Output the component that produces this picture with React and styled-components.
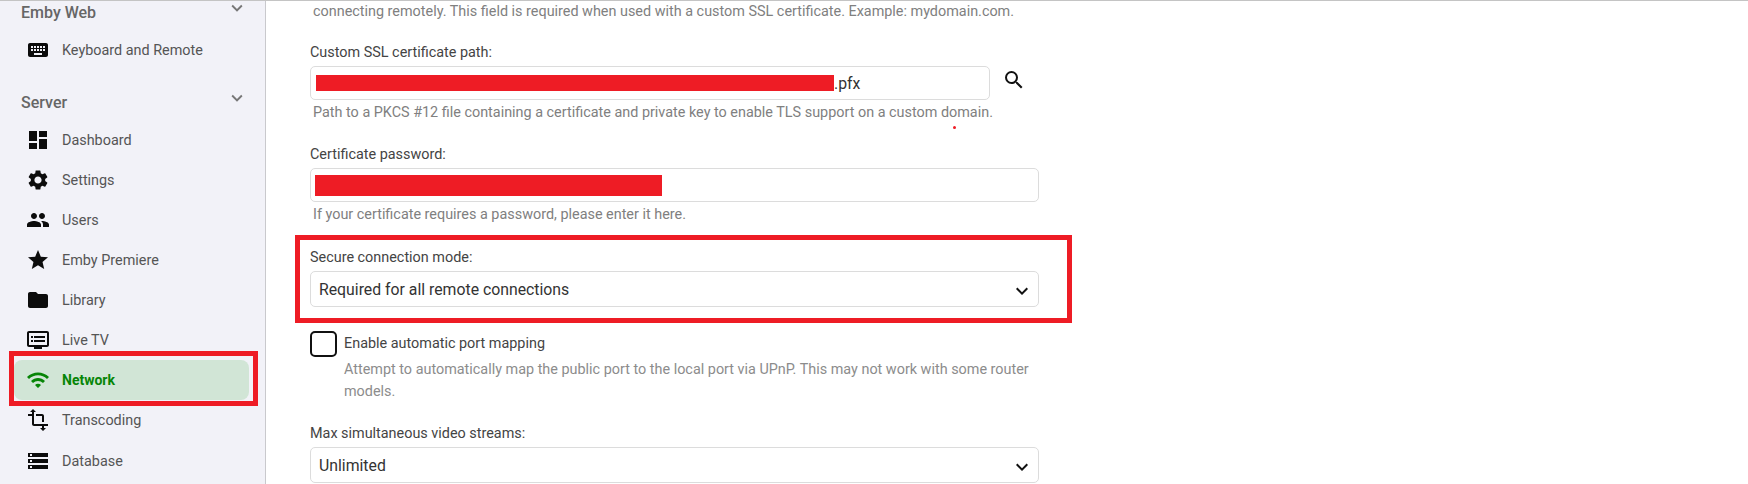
import React from "react";
import styled, {createGlobalStyle} from "styled-components";
import {
  MdKeyboard,
  MdDashboard,
  MdSettings,
  MdPeople,
  MdStar,
  MdFolder,
  MdDvr,
  MdWifi,
  MdTransform,
  MdStorage,
  MdSearch,
  MdKeyboardArrowDown,
} from "react-icons/md";

const sections = [
  {
    title: "Emby Web",
    items: [{icon: MdKeyboard, label: "Keyboard and Remote"}],
  },
  {
    title: "Server",
    items: [
      {icon: MdDashboard, label: "Dashboard"},
      {icon: MdSettings, label: "Settings"},
      {icon: MdPeople, label: "Users"},
      {icon: MdStar, label: "Emby Premiere"},
      {icon: MdFolder, label: "Library"},
      {icon: MdDvr, label: "Live TV"},
      {icon: MdWifi, label: "Network", active: true},
      {icon: MdTransform, label: "Transcoding"},
      {icon: MdStorage, label: "Database"},
    ],
  },
];

function App() {
  return (
    <Page>
      <GlobalStyle />
      <Sidebar>
        {sections.map((section) => (
          <Section key={section.title}>
            <SectionHead>
              <SectionTitle>{section.title}</SectionTitle>
              <MdKeyboardArrowDown />
            </SectionHead>
            {section.items.map((item) => (
              <NavItem key={item.label} $active={item.active}>
                <item.icon />
                <span>{item.label}</span>
                {item.active && <NavMark />}
              </NavItem>
            ))}
          </Section>
        ))}
      </Sidebar>
      <Main>
        <Help $first>
          connecting remotely. This field is required when used with a custom SSL certificate. Example: mydomain.com.
        </Help>

        <Field $top={21}>
          <Label>Custom SSL certificate path:</Label>
          <InputRow>
            <Input $short>
              <Redaction $width={518} $height={16} $left={-1} />
              <span>.pfx</span>
            </Input>
            <SearchButton>
              <MdSearch />
            </SearchButton>
          </InputRow>
          <Help>
            Path to a PKCS #12 file containing a certificate and private key to enable TLS support on a custom domain.
            <Speck />
          </Help>
        </Field>

        <Field $top={22}>
          <Label>Certificate password:</Label>
          <Input>
            <Redaction $width={347} $height={21} $left={-2} />
          </Input>
          <Help>If your certificate requires a password, please enter it here.</Help>
        </Field>

        <Field $top={23}>
          <FieldMark />
          <Label>Secure connection mode:</Label>
          <Select>
            <span>Required for all remote connections</span>
            <MdKeyboardArrowDown />
          </Select>
        </Field>

        <CheckRow>
          <CheckBox />
          <div>
            <CheckLabel>Enable automatic port mapping</CheckLabel>
            <CheckHelp>
              Attempt to automatically map the public port to the local port via UPnP. This may not work with some
              router models.
            </CheckHelp>
          </div>
        </CheckRow>

        <Field $top={21}>
          <Label>Max simultaneous video streams:</Label>
          <Select>
            <span>Unlimited</span>
            <MdKeyboardArrowDown />
          </Select>
        </Field>
      </Main>
    </Page>
  );
}
export default App;

const GlobalStyle = createGlobalStyle`
  html, body {
    margin: 0;
    height: 484px;
    overflow: hidden;
    background: #fff;
    font-family: Roboto, "Liberation Sans", sans-serif;
  }
`;
const Page = styled.div`
  display: flex;
  height: 483px;
  overflow: hidden;
  border-top: 1px solid #c4c4c4;
`;
const Sidebar = styled.aside`
  flex: none;
  width: 235px;
  padding: 0 16px 0 14px;
  background: #f2f2f8;
  border-right: 1px solid #c9c9cd;
`;
const Section = styled.section`
  margin-bottom: 14px;
  &:first-child {
    margin-top: -7px;
  }
`;
const SectionHead = styled.div`
  display: flex;
  align-items: center;
  justify-content: space-between;
  height: 36px;
  padding: 0 1px 0 7px;
  svg {
    width: 22px;
    height: 22px;
    margin-top: -9px;
    color: #777;
  }
`;
const SectionTitle = styled.h3`
  margin: 0;
  font-size: 16px;
  font-weight: 500;
  color: #666;
`;
const NavItem = styled.div`
  position: relative;
  display: flex;
  align-items: center;
  gap: 12px;
  height: 40px;
  padding-left: 12px;
  border-radius: 8px;
  background: ${(p) => (p.$active ? "#d1e5d6" : "transparent")};
  color: ${(p) => (p.$active ? "#078507" : "#555")};
  font-size: ${(p) => (p.$active ? "14px" : "14.4px")};
  font-weight: ${(p) => (p.$active ? 700 : 400)};
  svg {
    width: 24px;
    height: 24px;
    flex: none;
    color: ${(p) => (p.$active ? "#078507" : "#0c0c0c")};
  }
  &:nth-child(n + 3):last-child {
    margin-top: 1px;
  }
`;
const NavMark = styled.div`
  position: absolute;
  left: -5px;
  top: -9px;
  width: 249px;
  height: 55px;
  box-sizing: border-box;
  border: 5px solid #ee1c25;
`;
const Main = styled.main`
  flex: 1;
  min-width: 0;
  padding-left: 44px;
`;
const Field = styled.div`
  position: relative;
  width: 729px;
  margin-top: ${(p) => p.$top}px;
`;
const FieldMark = styled.div`
  position: absolute;
  left: -15px;
  top: -13px;
  width: 777px;
  height: 88px;
  box-sizing: border-box;
  border: 5px solid #ee1c25;
`;
const Label = styled.label`
  display: block;
  height: 20px;
  margin-bottom: 3px;
  font-size: 14.4px;
  line-height: 20px;
  color: #444;
`;
const InputRow = styled.div`
  display: flex;
  align-items: flex-start;
`;
const Input = styled.div`
  display: flex;
  align-items: center;
  box-sizing: border-box;
  width: ${(p) => (p.$short ? "680px" : "729px")};
  height: 34px;
  padding-left: 6px;
  border: 1px solid #dcdcdc;
  border-radius: 5px;
  background: #fff;
  font-size: 15.8px;
  color: #333;
`;
const Redaction = styled.div`
  flex: none;
  width: ${(p) => p.$width}px;
  height: ${(p) => p.$height}px;
  margin-left: ${(p) => p.$left}px;
  background: #ee1c25;
`;
const SearchButton = styled.div`
  display: flex;
  margin: 2px 0 0 12px;
  color: #111;
  svg {
    width: 24px;
    height: 24px;
  }
`;
const Help = styled.p`
  position: relative;
  margin: ${(p) => (p.$first ? "1px" : "3px")} 0 0 3px;
  height: 20px;
  font-size: 14.4px;
  line-height: 20px;
  color: #808080;
  white-space: nowrap;
`;
const Speck = styled.i`
  position: absolute;
  left: 640px;
  top: 23px;
  width: 3px;
  height: 3px;
  border-radius: 50%;
  background: #ee1c25;
`;
const Select = styled.div`
  display: flex;
  align-items: center;
  justify-content: space-between;
  box-sizing: border-box;
  height: 36px;
  padding: 0 4px 0 8px;
  border: 1px solid #dcdcdc;
  border-radius: 5px;
  background: #fff;
  font-size: 15.8px;
  color: #333;
  svg {
    width: 24px;
    height: 24px;
    margin-top: 3px;
    color: #111;
  }
`;
const CheckRow = styled.div`
  display: flex;
  gap: 7px;
  width: 729px;
  margin-top: 24px;
`;
const CheckBox = styled.div`
  flex: none;
  box-sizing: border-box;
  width: 27px;
  height: 26px;
  border: 2px solid #111;
  border-radius: 5px;
`;
const CheckLabel = styled.div`
  height: 22px;
  margin-top: 2px;
  font-size: 14.4px;
  line-height: 22px;
  color: #444;
`;
const CheckHelp = styled.p`
  margin: 4px 0 0;
  font-size: 14.4px;
  line-height: 22px;
  color: #8c8c8c;
`;
